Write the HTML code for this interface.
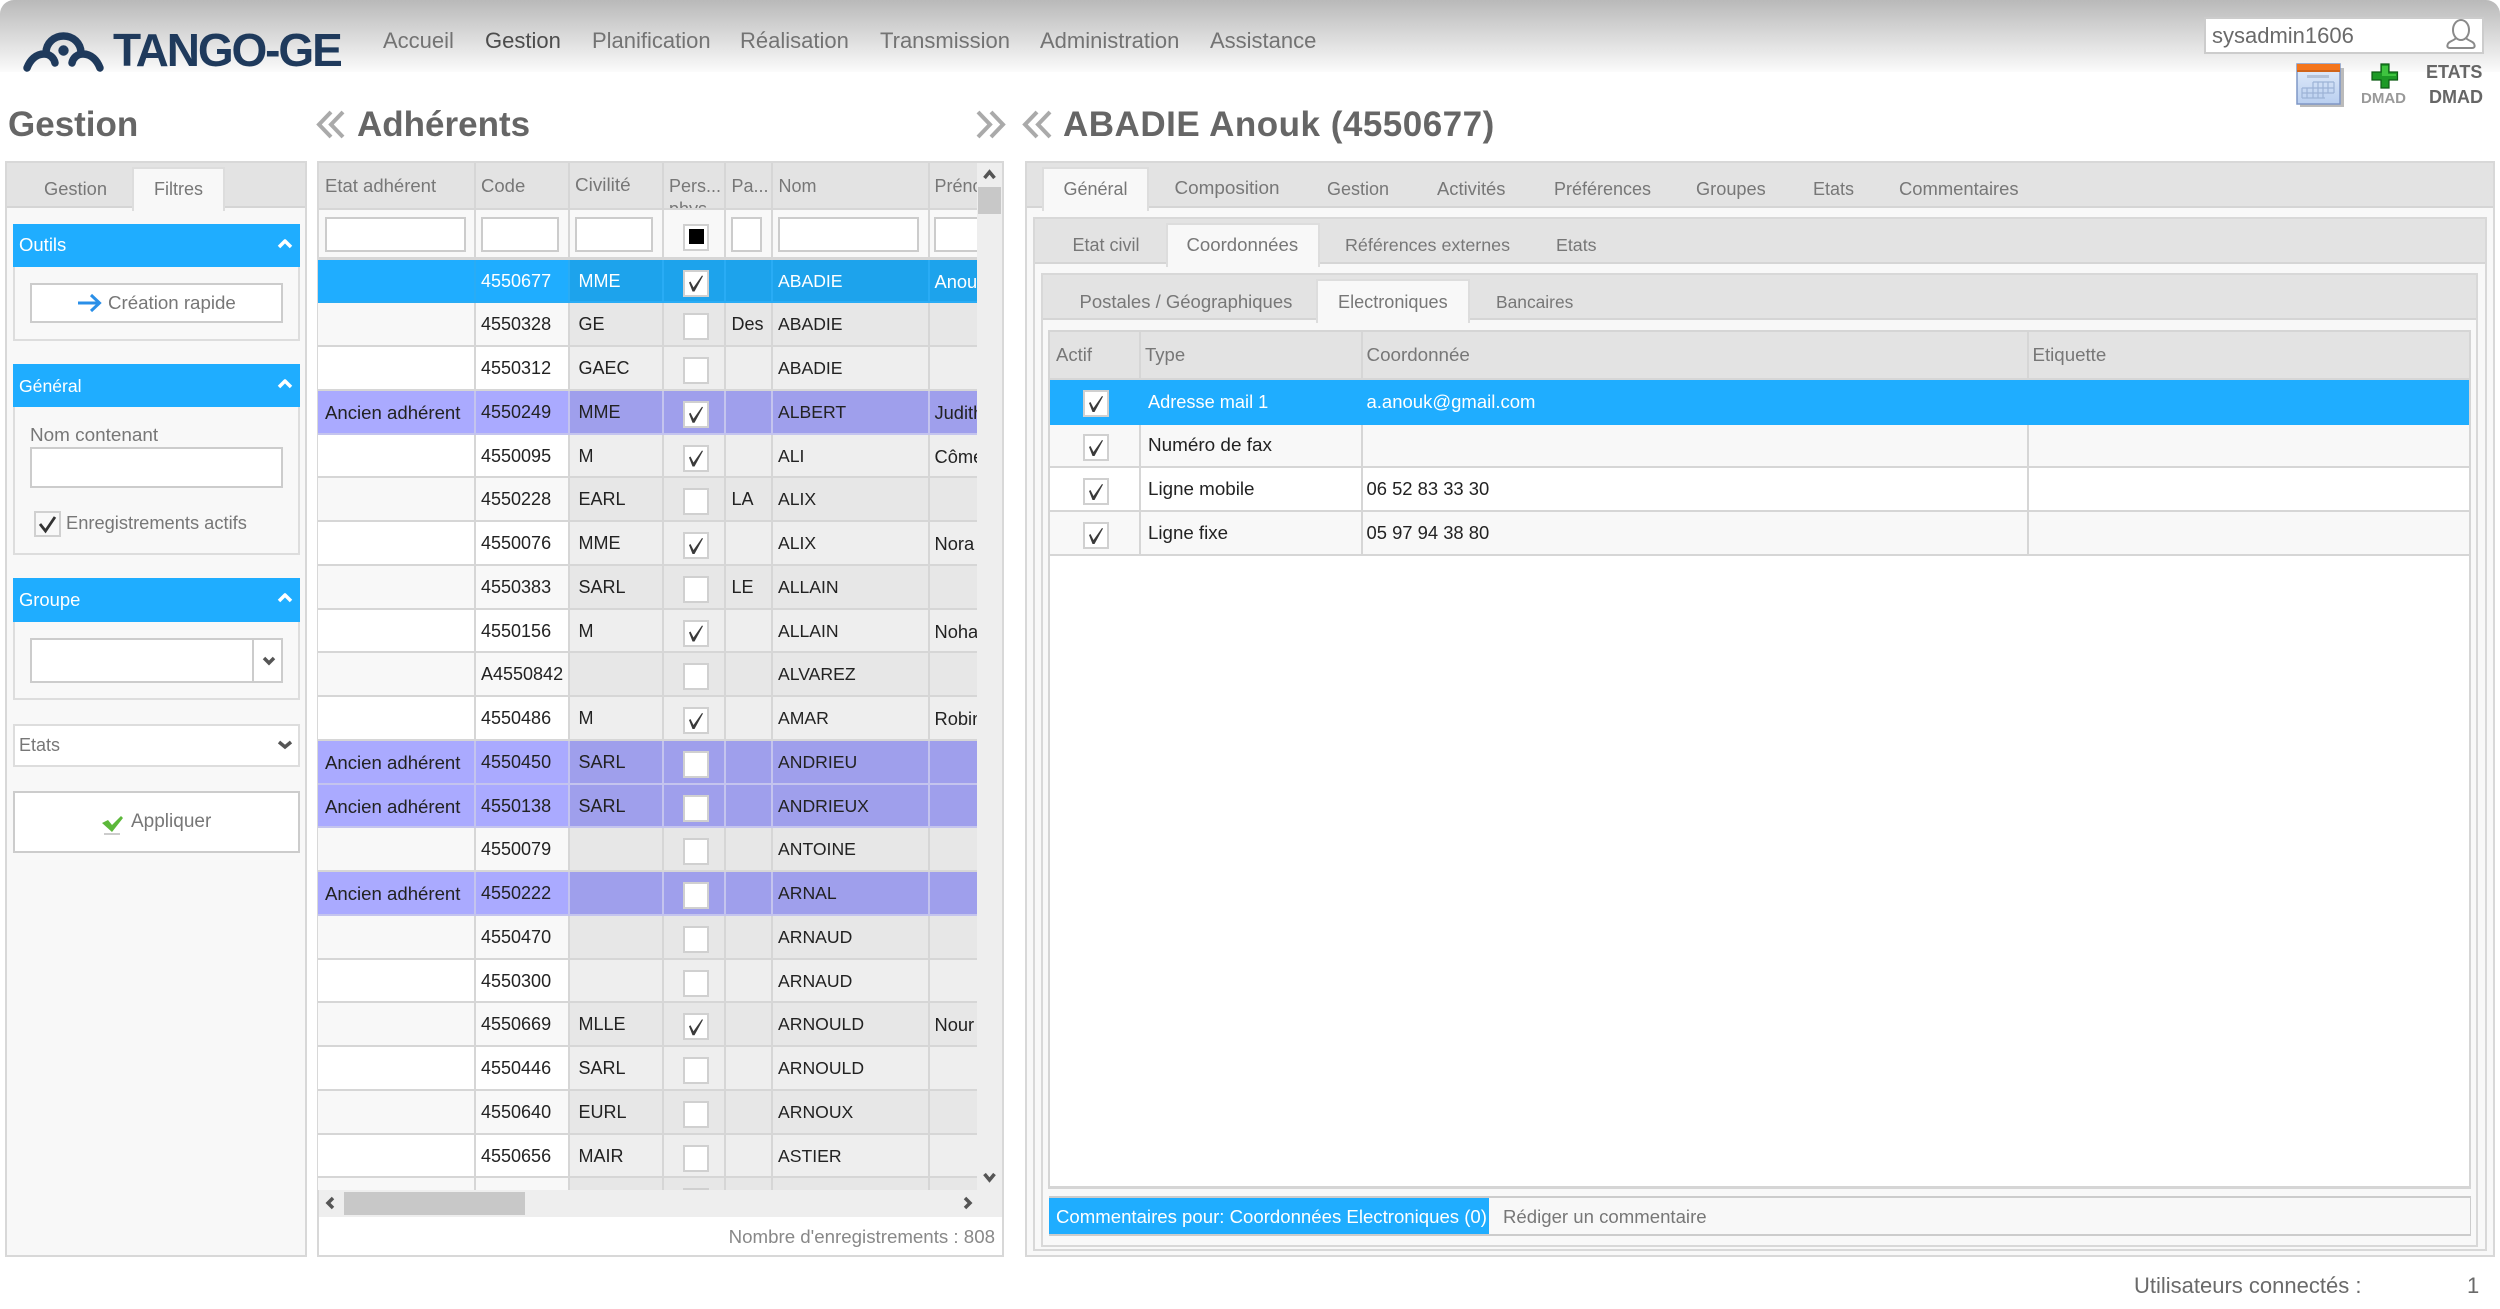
<!DOCTYPE html>
<html lang="fr"><head><meta charset="utf-8"><title>TANGO-GE</title>
<style>
*{box-sizing:border-box}
html,body{margin:0;padding:0;width:2500px;height:1309px;background:#fff;overflow:hidden;font:18px "Liberation Sans",sans-serif;color:#777}
div,span,b{position:absolute}
.t{white-space:nowrap;line-height:26px;height:26px}
#hd{left:0;top:0;width:2500px;height:72px;background:linear-gradient(#b9b9b9,#fbfbfb);border-radius:14px 14px 0 0}
.nav{font-size:22px;color:#737373;top:28px}
.h1{font-size:35px;font-weight:bold;color:#666;line-height:40px;height:40px;white-space:nowrap;top:105px}
.panel{background:#f8f8f8;border:2px solid #d8d8d8}
.bar{background:#e3e3e3;border-bottom:2px solid #d5d5d5}
.tab{background:#f8f8f8;border:2px solid #ddd;border-bottom:0}
.head{background:#1fadff;color:#fff}
.box{border:2px solid #ddd;background:#f8f8f8}
.inp{background:#fff;border:2px solid #ccc}
.ck{width:26px;height:27px;background:#fff;border:2px solid #d0d0d0}
.k::after{content:"";position:absolute;left:-2px;top:-2px;width:26px;height:27px;background:#3a3a3a;clip-path:polygon(6px 13px,7.500px 12px,10.500px 18px,19px 6px,20px 6.500px,11.500px 22px,9.500px 22px)}
#rows{left:318px;top:259.5px;width:659px;height:930.5px;overflow:hidden}
.r{position:relative;height:43.75px;width:659px;overflow:hidden;color:#222;line-height:43px;white-space:nowrap;
--a:#f8f8f8;--b:#e7e7e7;--l:#d6d6d6;
background:linear-gradient(var(--l),var(--l)) 0 100%/100% 2px no-repeat,linear-gradient(var(--l),var(--l)) 156px 0/2px 100% no-repeat,linear-gradient(var(--l),var(--l)) 250px 0/2px 100% no-repeat,linear-gradient(var(--l),var(--l)) 344px 0/2px 100% no-repeat,linear-gradient(var(--l),var(--l)) 406px 0/2px 100% no-repeat,linear-gradient(var(--l),var(--l)) 453px 0/2px 100% no-repeat,linear-gradient(var(--l),var(--l)) 610px 0/2px 100% no-repeat,linear-gradient(90deg,var(--a) 0 251px,var(--b) 251px)}
.w{--a:#fff;--b:#eee}
.s{--a:#1fadff;--b:#1da3ec;--l:#29acf5;color:#fff}
.s span{color:#fff}
.v{--a:#aaaaff;--b:#9f9fec;--l:#c4c4ee}
.e{left:7px;font-size:18.6px}.o{left:163px}.c{left:260.5px}.p{left:413.5px}.n{left:460px;font-size:17.6px}.f{left:616.5px;font-size:18.3px}
.r .ck{left:365px;top:10px}
.g{background:#d6d6d6}
.gt{color:#222}
</style></head><body>
<div id="hd"></div>
<div class="t" style="left:113px;top:24px;height:52px;line-height:52px;font-size:46px;font-weight:bold;color:#1f3a5c;letter-spacing:-2.1px">TANGO-GE</div>
<div class="t nav" style="left:383px">Accueil</div>
<div class="t nav" style="left:485px;color:#4c4c4c">Gestion</div>
<div class="t nav" style="left:592px">Planification</div>
<div class="t nav" style="left:740px">Réalisation</div>
<div class="t nav" style="left:880px">Transmission</div>
<div class="t nav" style="left:1040px">Administration</div>
<div class="t nav" style="left:1210px">Assistance</div>

<div class="inp" style="left:2204px;top:17px;width:280px;height:37px"></div>
<div class="t" style="left:2212px;top:23px;font-size:22px;color:#6a6a6a">sysadmin1606</div>
<div class="t" style="left:2426px;top:59px;font-weight:bold;color:#666">ETATS</div>
<div class="t" style="left:2429px;top:84px;font-weight:bold;color:#666">DMAD</div>
<div class="t" style="left:2361px;top:86px;font-weight:bold;font-size:15px;color:#999">DMAD</div>

<div class="t h1" style="left:8px">Gestion</div>
<div class="t h1" style="left:357px">Adhérents</div>
<div class="t h1" style="left:1063px;letter-spacing:.5px">ABADIE Anouk (4550677)</div>

<!-- left panel -->
<div class="panel" style="left:5px;top:161px;width:302px;height:1096px"></div>
<div class="bar" style="left:7px;top:163px;width:298px;height:45px"></div>
<div class="tab" style="left:132px;top:167px;width:93px;height:44px"></div>
<div class="t" style="left:44px;top:176px;font-size:18.3px">Gestion</div>
<div class="t" style="left:154px;top:176px">Filtres</div>

<div class="box" style="left:13px;top:224px;width:287px;height:117px"></div>
<div class="head" style="left:13px;top:224px;width:287px;height:43px"></div>
<div class="t" style="left:19px;top:232px;color:#fff;font-size:18.5px">Outils</div>
<div class="inp" style="left:30px;top:283px;width:253px;height:40px"></div>
<div class="t" style="left:108px;top:290px;font-size:18.7px">Création rapide</div>

<div class="box" style="left:13px;top:364px;width:287px;height:191px"></div>
<div class="head" style="left:13px;top:364px;width:287px;height:43px"></div>
<div class="t" style="left:19px;top:372.5px;color:#fff;font-size:17.6px">Général</div>
<div class="t" style="left:30px;top:423px;font-size:18.9px">Nom contenant</div>
<div class="inp" style="left:30px;top:447px;width:253px;height:41px"></div>
<div class="ck" style="left:34px;top:511px;width:27px;height:26px;background:#f8f8f8"></div>
<div class="t" style="left:66px;top:510px;font-size:18.3px">Enregistrements actifs</div>

<div class="box" style="left:13px;top:578px;width:287px;height:122px"></div>
<div class="head" style="left:13px;top:578px;width:287px;height:44px"></div>
<div class="t" style="left:19px;top:587px;color:#fff;font-size:18.4px">Groupe</div>
<div class="inp" style="left:30px;top:638px;width:253px;height:45px"></div>
<div style="left:252px;top:638px;width:2px;height:45px;background:#ccc"></div>

<div class="box" style="left:13px;top:724px;width:287px;height:43px;background:#fff"></div>
<div class="t" style="left:19px;top:732px">Etats</div>
<div class="box" style="left:13px;top:791px;width:287px;height:62px;background:#fff;border-color:#ccc"></div>
<div class="t" style="left:131px;top:809px;font-size:19px">Appliquer</div>

<!-- middle grid -->
<div class="panel" style="left:317px;top:161px;width:687px;height:1096px;background:#fff"></div>
<div style="left:319px;top:163px;width:658px;height:45px;background:#e3e3e3;overflow:hidden">
<span class="t" style="left:6px;top:10px;font-size:18.5px">Etat adhérent</span>
<span class="t" style="left:162px;top:10px;font-size:18.5px">Code</span>
<span class="t" style="left:256px;top:10px;font-size:18.9px">Civilité</span>
<span class="t" style="left:350px;top:10px">Pers...</span>
<span class="t" style="left:350px;top:33px">phys</span>
<span class="t" style="left:412.5px;top:10px">Pa...</span>
<span class="t" style="left:459.5px;top:10px">Nom</span>
<span class="t" style="left:615.5px;top:10px">Prénom</span>
</div>
<div class="g" style="left:319px;top:208px;width:658px;height:2px"></div>
<div style="left:319px;top:210px;width:658px;height:47px;background:#f8f8f8"></div>
<div class="g" style="left:319px;top:257px;width:658px;height:3px"></div>
<div class="g" style="left:474px;top:163px;width:2px;height:94px"></div>
<div class="g" style="left:568px;top:163px;width:2px;height:94px"></div>
<div class="g" style="left:662px;top:163px;width:2px;height:94px"></div>
<div class="g" style="left:724px;top:163px;width:2px;height:94px"></div>
<div class="g" style="left:771px;top:163px;width:2px;height:94px"></div>
<div class="g" style="left:928px;top:163px;width:2px;height:94px"></div>
<div class="inp" style="left:325px;top:217px;width:141px;height:35px"></div>
<div class="inp" style="left:481px;top:217px;width:78px;height:35px"></div>
<div class="inp" style="left:575px;top:217px;width:78px;height:35px"></div>
<div class="ck" style="left:683px;top:224px"></div>
<div style="left:689px;top:229px;width:15px;height:15px;background:#000"></div>
<div class="inp" style="left:731px;top:217px;width:31px;height:35px"></div>
<div class="inp" style="left:778px;top:217px;width:141px;height:35px"></div>
<div class="inp" style="left:934px;top:217px;width:60px;height:35px;clip-path:inset(0 17px 0 0)"></div>

<div id="rows">
<div class="r s"><span class="o">4550677</span><span class="c">MME</span><span class="ck k"></span><span class="n">ABADIE</span><span class="f">Anouk</span></div>
<div class="r"><span class="o">4550328</span><span class="c">GE</span><span class="ck"></span><span class="p">Des</span><span class="n">ABADIE</span></div>
<div class="r w"><span class="o">4550312</span><span class="c">GAEC</span><span class="ck"></span><span class="n">ABADIE</span></div>
<div class="r v"><span class="e">Ancien adhérent</span><span class="o">4550249</span><span class="c">MME</span><span class="ck k"></span><span class="n">ALBERT</span><span class="f">Judith</span></div>
<div class="r w"><span class="o">4550095</span><span class="c">M</span><span class="ck k"></span><span class="n">ALI</span><span class="f">Côme</span></div>
<div class="r"><span class="o">4550228</span><span class="c">EARL</span><span class="ck"></span><span class="p">LA</span><span class="n">ALIX</span></div>
<div class="r w"><span class="o">4550076</span><span class="c">MME</span><span class="ck k"></span><span class="n">ALIX</span><span class="f">Nora</span></div>
<div class="r"><span class="o">4550383</span><span class="c">SARL</span><span class="ck"></span><span class="p">LE</span><span class="n">ALLAIN</span></div>
<div class="r w"><span class="o">4550156</span><span class="c">M</span><span class="ck k"></span><span class="n">ALLAIN</span><span class="f">Nohan</span></div>
<div class="r"><span class="o">A4550842</span><span class="ck"></span><span class="n">ALVAREZ</span></div>
<div class="r w"><span class="o">4550486</span><span class="c">M</span><span class="ck k"></span><span class="n">AMAR</span><span class="f">Robin</span></div>
<div class="r v"><span class="e">Ancien adhérent</span><span class="o">4550450</span><span class="c">SARL</span><span class="ck"></span><span class="n">ANDRIEU</span></div>
<div class="r v"><span class="e">Ancien adhérent</span><span class="o">4550138</span><span class="c">SARL</span><span class="ck"></span><span class="n">ANDRIEUX</span></div>
<div class="r"><span class="o">4550079</span><span class="ck"></span><span class="n">ANTOINE</span></div>
<div class="r v"><span class="e">Ancien adhérent</span><span class="o">4550222</span><span class="ck"></span><span class="n">ARNAL</span></div>
<div class="r"><span class="o">4550470</span><span class="ck"></span><span class="n">ARNAUD</span></div>
<div class="r w"><span class="o">4550300</span><span class="ck"></span><span class="n">ARNAUD</span></div>
<div class="r"><span class="o">4550669</span><span class="c">MLLE</span><span class="ck k"></span><span class="n">ARNOULD</span><span class="f">Nour</span></div>
<div class="r w"><span class="o">4550446</span><span class="c">SARL</span><span class="ck"></span><span class="n">ARNOULD</span></div>
<div class="r"><span class="o">4550640</span><span class="c">EURL</span><span class="ck"></span><span class="n">ARNOUX</span></div>
<div class="r w"><span class="o">4550656</span><span class="c">MAIR</span><span class="ck"></span><span class="n">ASTIER</span></div>
<div class="r"><span class="ck"></span></div>
</div>
<div style="left:977px;top:163px;width:25px;height:1027px;background:#eee"></div>
<div style="left:978px;top:187px;width:23px;height:27px;background:#c8c8c8"></div>
<div style="left:319px;top:1190px;width:683px;height:27px;background:#eee"></div>
<div style="left:344px;top:1192px;width:181px;height:23px;background:#c8c8c8"></div>
<div class="t" style="right:1505px;top:1224px;color:#888;font-size:18.7px">Nombre d'enregistrements : 808</div>

<!-- right panel -->
<div class="panel" style="left:1025px;top:161px;width:1470px;height:1096px"></div>
<div class="bar" style="left:1027px;top:163px;width:1466px;height:45px"></div>
<div class="tab" style="left:1042px;top:167px;width:107px;height:44px"></div>
<div class="t" style="left:1063.5px;top:176px">Général</div>
<div class="t" style="left:1174.5px;top:176px;font-size:18.9px">Composition</div>
<div class="t" style="left:1327px;top:176px">Gestion</div>
<div class="t" style="left:1437px;top:176px;font-size:18.4px">Activités</div>
<div class="t" style="left:1554px;top:176px">Préférences</div>
<div class="t" style="left:1696px;top:176px;font-size:18.2px">Groupes</div>
<div class="t" style="left:1813px;top:176px">Etats</div>
<div class="t" style="left:1899px;top:176px;font-size:18.4px">Commentaires</div>

<div class="panel" style="left:1033px;top:217px;width:1454px;height:1034px"></div>
<div class="bar" style="left:1035px;top:219px;width:1450px;height:45px"></div>
<div class="tab" style="left:1166px;top:223px;width:154px;height:44px"></div>
<div class="t" style="left:1072.5px;top:232px">Etat civil</div>
<div class="t" style="left:1186.5px;top:232px;font-size:18.6px">Coordonnées</div>
<div class="t" style="left:1345px;top:232px;font-size:17.9px">Références externes</div>
<div class="t" style="left:1556px;top:232px;font-size:17.8px">Etats</div>

<div class="panel" style="left:1041px;top:273px;width:1437px;height:974px"></div>
<div class="bar" style="left:1043px;top:275px;width:1433px;height:45px"></div>
<div class="tab" style="left:1316px;top:279px;width:154px;height:44px"></div>
<div class="t" style="left:1079.5px;top:288.5px;font-size:18.5px">Postales / Géographiques</div>
<div class="t" style="left:1338px;top:288.5px;font-size:18.1px">Electroniques</div>
<div class="t" style="left:1496px;top:288.5px;font-size:17.4px">Bancaires</div>

<div style="left:1048px;top:330px;width:1423px;height:859px;background:#fff;border:2px solid #d5d5d5;border-bottom-width:3px"></div>
<div style="left:1050px;top:332px;width:1419px;height:46px;background:#e3e3e3"></div>
<div class="g" style="left:1050px;top:378px;width:1419px;height:2px"></div>
<div class="t" style="left:1056px;top:342px;font-size:18.5px">Actif</div>
<div class="t" style="left:1145px;top:342px;font-size:18.5px">Type</div>
<div class="t" style="left:1366.5px;top:342px;font-size:18.8px">Coordonnée</div>
<div class="t" style="left:2032.5px;top:342px;font-size:18.7px">Etiquette</div>
<div style="left:1050px;top:380px;width:1419px;height:45px;background:#1fadff"></div>
<div style="left:1050px;top:425px;width:1419px;height:41px;background:#f8f8f8"></div>
<div class="g" style="left:1050px;top:466px;width:1419px;height:2px"></div>
<div class="g" style="left:1050px;top:510px;width:1419px;height:2px"></div>
<div style="left:1050px;top:512px;width:1419px;height:42px;background:#f8f8f8"></div>
<div class="g" style="left:1050px;top:554px;width:1419px;height:2px"></div>
<div class="g" style="left:1139px;top:332px;width:2px;height:48px"></div>
<div class="g" style="left:1361px;top:332px;width:2px;height:48px"></div>
<div class="g" style="left:2027px;top:332px;width:2px;height:48px"></div>
<div class="g" style="left:1139px;top:425px;width:2px;height:130px"></div>
<div class="g" style="left:1361px;top:425px;width:2px;height:130px"></div>
<div class="g" style="left:2027px;top:425px;width:2px;height:130px"></div>
<div class="ck k" style="left:1083px;top:390px"></div>
<div class="ck k" style="left:1083px;top:434px"></div>
<div class="ck k" style="left:1083px;top:478px"></div>
<div class="ck k" style="left:1083px;top:522px"></div>
<div class="t" style="left:1148px;top:388.5px;color:#fff;font-size:18.2px">Adresse mail 1</div>
<div class="t" style="left:1366.5px;top:388.5px;color:#fff;font-size:18.5px">a.anouk@gmail.com</div>
<div class="t gt" style="left:1148px;top:432.5px;font-size:18.9px">Numéro de fax</div>
<div class="t gt" style="left:1148px;top:476px;font-size:18.8px">Ligne mobile</div>
<div class="t gt" style="left:1366.5px;top:476px;font-size:18.4px">06 52 83 33 30</div>
<div class="t gt" style="left:1148px;top:520px;font-size:18.7px">Ligne fixe</div>
<div class="t gt" style="left:1366.5px;top:520px;font-size:18.4px">05 97 94 38 80</div>

<div style="left:1049px;top:1196px;width:1422px;height:40px;background:#f8f8f8;border:1px solid #ccc;border-width:2px 1px"></div>
<div style="left:1049px;top:1198px;width:440px;height:36px;background:#1fadff"></div>
<div class="t" style="left:1056px;top:1204px;color:#fff;font-size:18.6px">Commentaires pour: Coordonnées Electroniques (0)</div>
<div class="t" style="left:1503px;top:1204px;font-size:18.6px">Rédiger un commentaire</div>

<div class="t" style="left:2134px;top:1273px;font-size:22px;color:#6a6a6a">Utilisateurs connectés :</div>
<div class="t" style="left:2467px;top:1273px;font-size:22px;color:#6a6a6a">1</div>

<svg width="2500" height="1309" viewBox="0 0 2500 1309" style="position:absolute;left:0;top:0" fill="none">
<defs>
<linearGradient id="cal" x1="0" y1="0" x2="0" y2="1"><stop offset="0" stop-color="#e4edfa"/><stop offset="1" stop-color="#b9cff0"/></linearGradient>
</defs>
<!-- logo -->
<g stroke="#1f3a5c" stroke-width="7.500" stroke-linecap="round">
<path d="M27 68C30 60 36 54 44 54C50 54 54 58 55 63"/>
<path d="M100 68C97 60 91 54 83 54C77 54 73 58 72 63"/>
<path d="M46 53C46 43 54 36 63.500 36S81 43 81 53"/>
</g>
<circle cx="63.500" cy="50.500" r="5.200" fill="#1f3a5c"/>
<!-- user -->
<g stroke="#8a8a8a" stroke-width="2">
<ellipse cx="2461" cy="30" rx="8" ry="10"/>
<path d="M2456 38C2454 41 2448 41 2447.500 45C2447 47 2448 48 2450 48H2472C2474 48 2475 47 2474.500 45C2474 41 2468 41 2466 38"/>
</g>
<!-- calendar -->
<rect x="2300" y="68" width="44" height="39" fill="#bbb"/>
<rect x="2297" y="64" width="43" height="40" fill="url(#cal)" stroke="#7f97c6" stroke-width="1.500"/>
<rect x="2297" y="64" width="43" height="8" fill="#f4761e"/>
<rect x="2297" y="70" width="43" height="2" fill="#d0641a"/>
<path d="M2313 82H2334M2302 88H2334M2302 93H2334M2302 98H2325M2313 82V98M2318 82V98M2323 82V98M2328 82V93M2334 82V93M2302 88V98M2307 88V98" stroke="#9db3d6" stroke-width="1.200"/>
<rect x="2307" y="75" width="22" height="3" fill="#b4c2d8"/>
<!-- plus -->
<path d="M2381 64H2389V72H2397.500V80H2389V88H2381V80H2372V72H2381Z" fill="#1d9a26" stroke="#0d5c14" stroke-width="1.200"/>
<path d="M2382 66H2388V74H2396V76H2382V74" fill="#3ec43f"/>
<!-- double chevrons -->
<g stroke="#aaa" stroke-width="4">
<path d="M331 112L319 124.500L331 137M343 112L331 124.500L343 137"/>
<path d="M978 112L990 124.500L978 137M991 112L1003 124.500L991 137"/>
<path d="M1037 112L1025 124.500L1037 137M1050 112L1038 124.500L1050 137"/>
</g>
<!-- panel chevrons -->
<g stroke="#fff" stroke-width="3.500" stroke-linejoin="round">
<path d="M279 247L285 241L291 247"/><path d="M279 387L285 381L291 387"/><path d="M279 601L285 595L291 601"/>
</g>
<g stroke="#555" stroke-width="3.500">
<path d="M264 658L269 663L274 658"/><path d="M279 742L285 747L291 742"/>
<path d="M984.500 178L989.500 172L994.500 178"/><path d="M984.500 1174L989.500 1180L994.500 1174"/>
<path d="M333 1198L328 1203L333 1208"/><path d="M965 1198L970 1203L965 1208"/>
</g>
<!-- arrow -->
<path d="M78 303H98M91 295L99.500 303L91 311" stroke="#2a8fe8" stroke-width="3"/>
<!-- check actifs -->
<path d="M40 524L45.500 531L55 517" stroke="#333" stroke-width="2.800"/>
<!-- appliquer -->
<path d="M102 823L108 820L112 825L121 816L123 818L112 832Z" fill="#5cb83a"/>
<path d="M104 834H120" stroke="#ccc" stroke-width="2"/>
</svg>
</body></html>
